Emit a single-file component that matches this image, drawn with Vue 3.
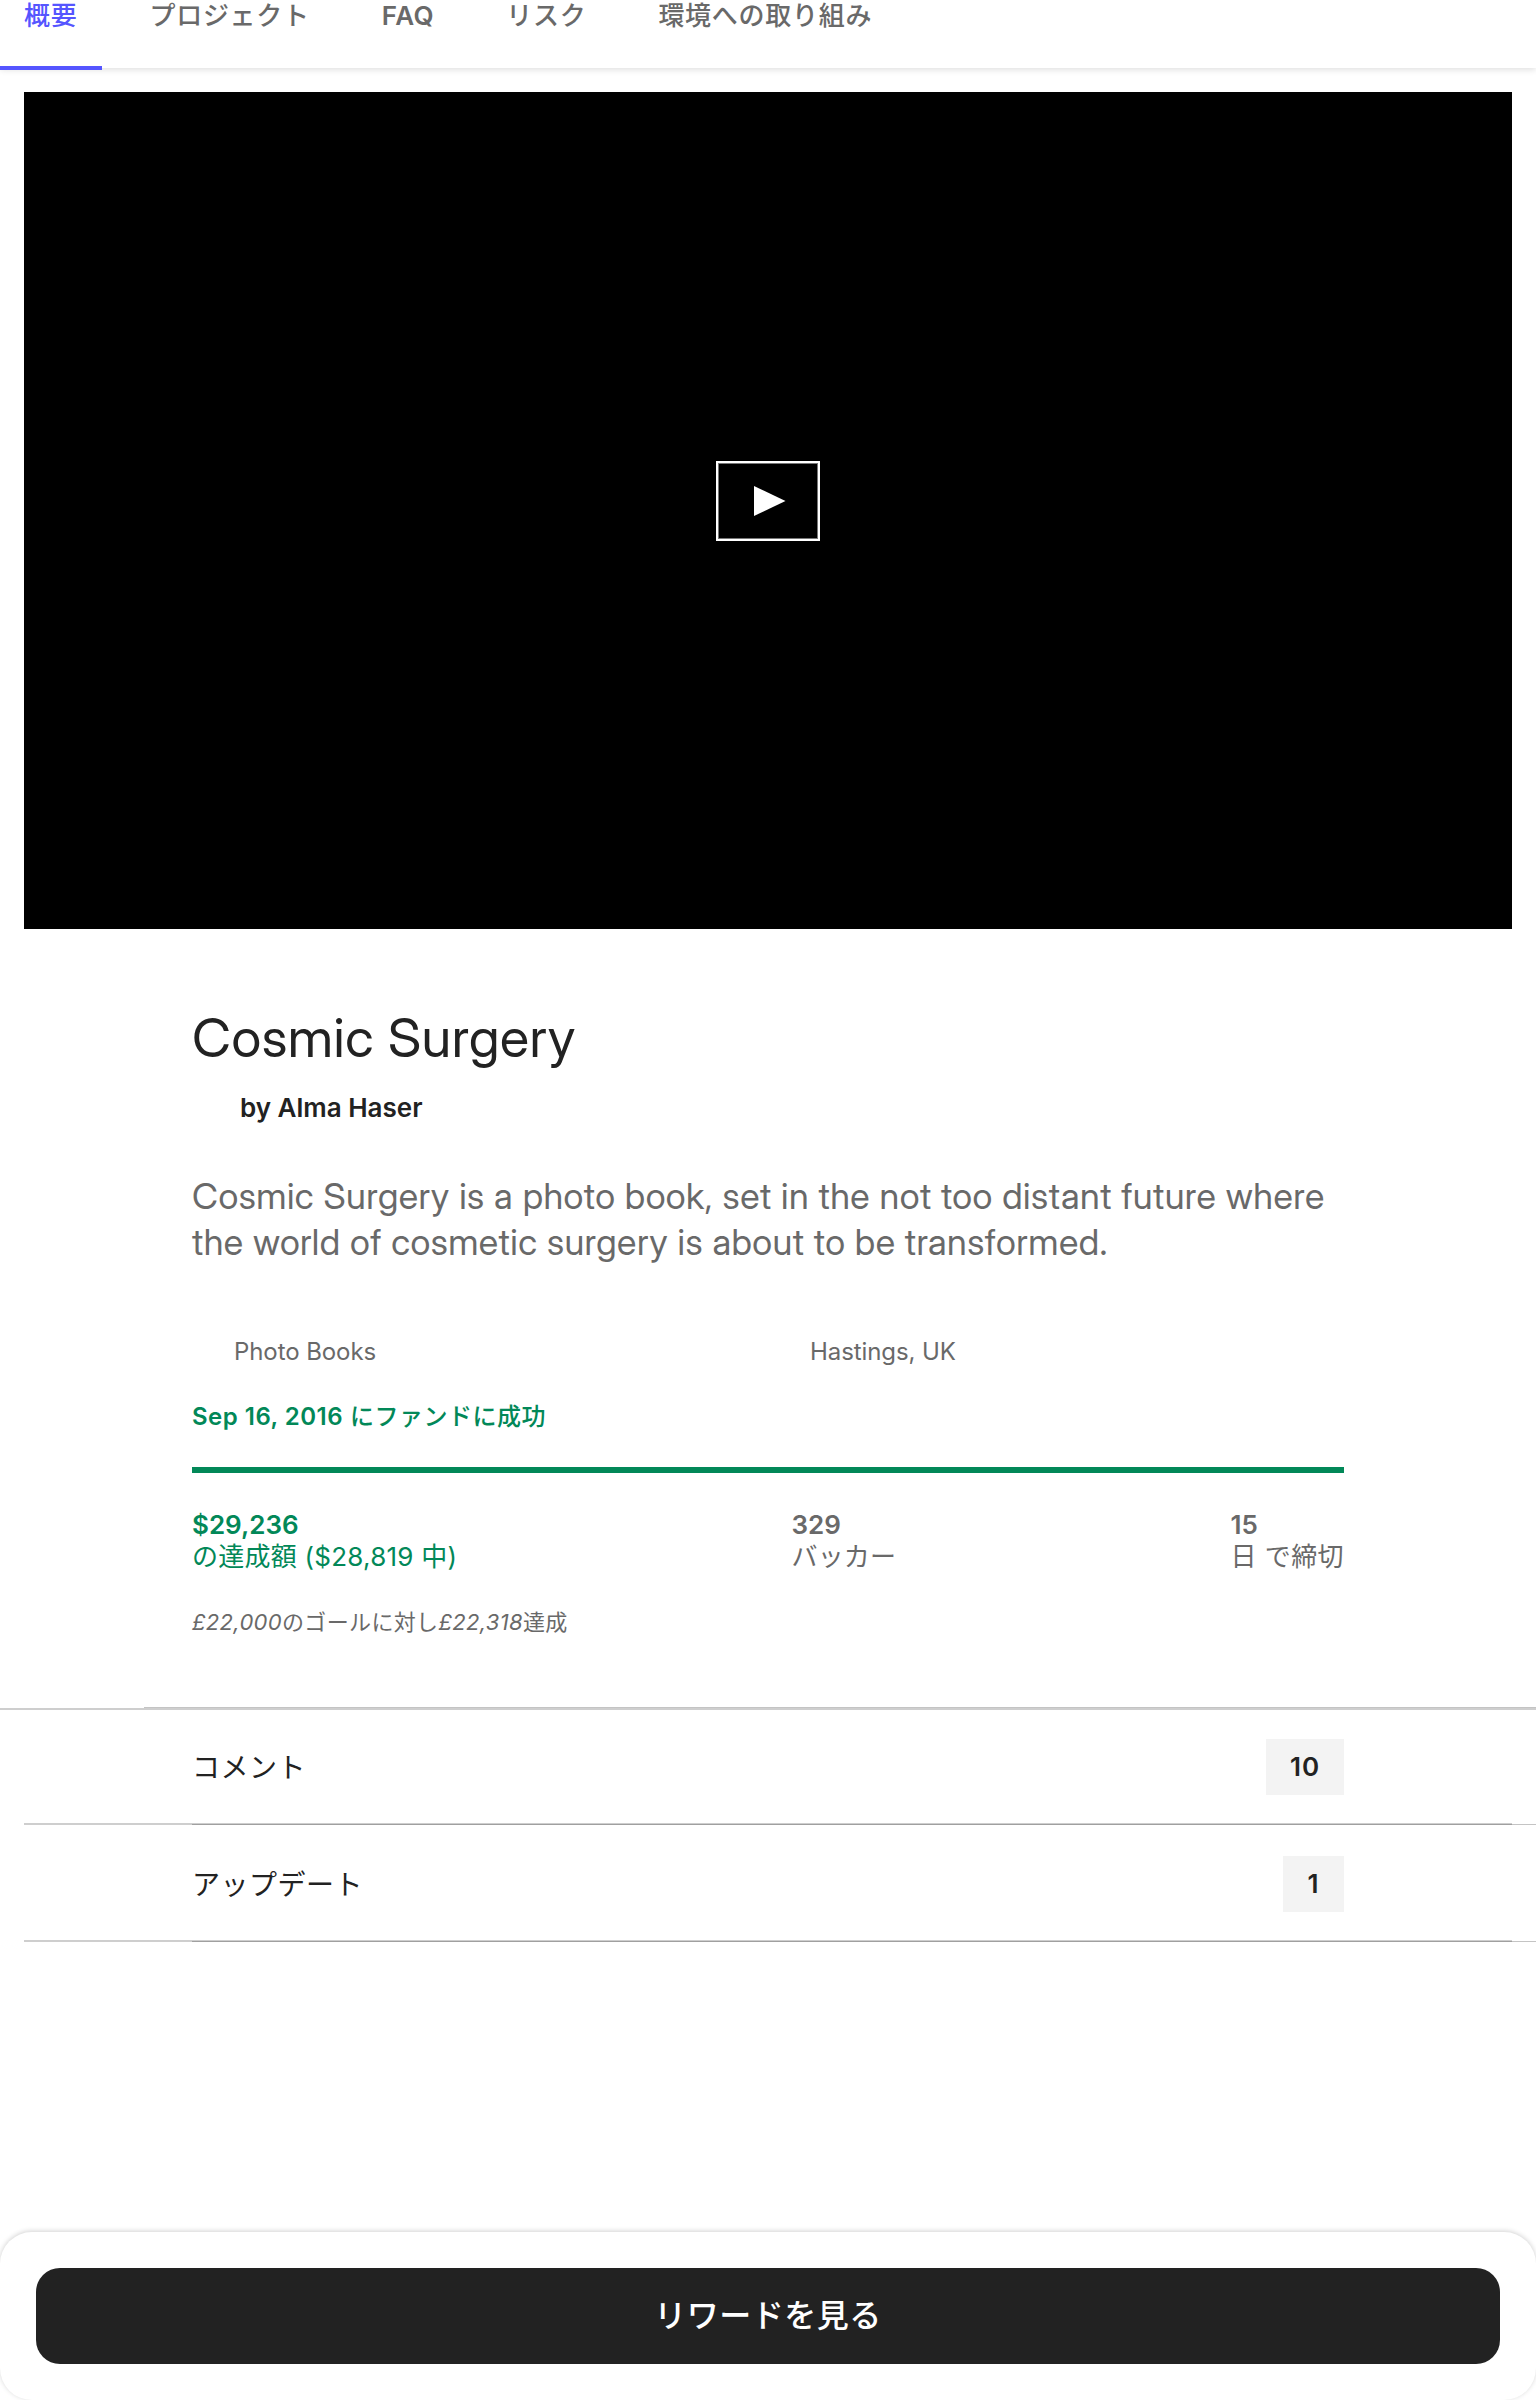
<script setup>
const tabs = ['概要', 'プロジェクト', 'FAQ', 'リスク', '環境への取り組み']
const rows = [
  { label: 'コメント', count: 10 },
  { label: 'アップデート', count: 1 },
]
</script>

<template>
  <div class="page">
    <nav class="tabs">
      <a v-for="(t, i) in tabs" :key="t" class="tab" :class="{ active: i === 0, latin: t === 'FAQ' }">{{ t }}</a>
    </nav>
    <section class="video">
      <button class="play" aria-label="play">
        <svg width="32" height="30" viewBox="0 0 32 30"><path d="M0 0 31.5 15 0 30Z" fill="#fff" /></svg>
      </button>
    </section>
    <main class="content">
      <h1 class="title">Cosmic Surgery</h1>
      <p class="author">by Alma Haser</p>
      <p class="blurb">Cosmic Surgery is a photo book, set in the not too distant future where the world of cosmetic surgery is about to be transformed.</p>
      <div class="meta"><span>Photo Books</span><span>Hastings, UK</span></div>
      <p class="funded"><time>Sep 16, 2016</time> にファンドに成功</p>
      <div class="bar"></div>
      <div class="stats">
        <div class="stat green"><b>$29,236</b><span>の達成額 ($28,819 中)</span></div>
        <div class="stat"><b>329</b><span>バッカー</span></div>
        <div class="stat"><b>15</b><span>日 で締切</span></div>
      </div>
      <p class="converted">£22,000のゴールに対し£22,318達成</p>
    </main>
    <section class="links">
      <div class="rule"></div>
      <div v-for="r in rows" :key="r.label" class="row">
        <span class="label">{{ r.label }}</span><span class="count">{{ r.count }}</span>
      </div>
    </section>
    <footer class="dock"><button class="cta">リワードを見る</button></footer>
  </div>
</template>

<style>
body { margin: 0; background: #fff; }
</style>

<style scoped>
.page { width: 1536px; height: 2400px; overflow: hidden; display: flex; flex-direction: column; font-family: Inter, "Noto Sans CJK JP", sans-serif; color: #222; }
.page, .page * { box-sizing: border-box; }
.tabs { position: relative; flex: none; height: 68px; padding-left: 24px; display: flex; gap: 72px; box-shadow: 0 2px 6px rgba(0,0,0,.12); font-size: 26px; font-weight: 500; line-height: 32px; letter-spacing: .72px; color: #696969; }
.tab.latin { font-weight: 600; letter-spacing: .5px; }
.tab.active { color: #5555ff; }
.tab.active::after { content: ""; position: absolute; left: 0; top: 66px; width: 102px; height: 4px; background: #5555ff; }
.video { flex: none; height: 837px; margin: 24px 24px 0; padding-bottom: 19px; background: #000; display: flex; align-items: center; justify-content: center; }
.play { width: 104px; height: 80px; padding: 0 0 0 4px; border: 2px solid #fff; background: #000; box-shadow: inset 0 0 0 1px #777; display: flex; align-items: center; justify-content: center; }
.content { flex: none; height: 778px; padding: 77px 192px 0; }
.title { margin: 0; font-family: "Inter Display", Inter, sans-serif; font-size: 54px; font-weight: 400; line-height: 64px; letter-spacing: .5px; }
.author { margin: 20px 0 0; padding-left: 48px; font-size: 26px; font-weight: 600; line-height: 36px; letter-spacing: 0; }
.blurb { margin: 47px 0 0; font-family: "Inter Display", Inter, sans-serif; font-size: 36px; line-height: 46px; letter-spacing: .46px; color: #696969; }
.meta { display: flex; margin-top: 69px; font-size: 24px; line-height: 36px; letter-spacing: -.08px; color: #696969; }
.meta span { width: 50%; padding-left: 42px; }
.funded { margin: 29px 0 32px; font-size: 24px; font-weight: 500; line-height: 36px; letter-spacing: .5px; color: #028858; }
.funded time { font-weight: 600; }
.bar { height: 6px; background: #028858; }
.stats { margin-top: 36px; display: flex; justify-content: space-between; color: #696969; font-size: 26px; line-height: 32px; letter-spacing: .24px; }
.stat { display: flex; flex-direction: column; }
.stat:last-child span { letter-spacing: .42px; }
.stat b { font-weight: 600; letter-spacing: 0; }
.stat.green { color: #028858; }
.converted { margin: 33px 0 0; font-size: 22px; line-height: 32px; letter-spacing: .34px; font-style: italic; font-synthesis: none; color: #696969; }
.links { flex: none; }
.rule { height: 3px; background: linear-gradient(#c4c4c4, #c4c4c4) 144px 0 / 1392px 1px no-repeat, linear-gradient(#cecece, #cecece) 0 1px / 100% 2px no-repeat; }
.row { height: 117px; padding: 31px 192px 0; display: flex; align-items: flex-start; justify-content: space-between; background: linear-gradient(#a0a0a0, #a0a0a0) 192px 100% / 1320px 1px no-repeat, linear-gradient(#cecece, #cecece) 24px 100% / 1488px 2px no-repeat, linear-gradient(#c4c4c4, #c4c4c4) 1512px 100% / 24px 1px no-repeat; }
.rule + .row { height: 115px; padding-top: 29px; }
.label { font-size: 28px; line-height: 58px; letter-spacing: .5px; }
.count { min-width: 61px; font-size: 26px; font-weight: 600; line-height: 56px; letter-spacing: .9px; text-align: center; padding: 0 24px; background: #f3f3f3; }
.dock { flex: none; margin-top: auto; height: 168px; padding: 36px; border-radius: 32px; box-shadow: 0 -1px 5px rgba(0,0,0,.18); }
.cta { display: block; width: 100%; height: 96px; padding: 0; border: 0; border-radius: 24px; background: #222; color: #fff; font: 500 32px/96px Inter, "Noto Sans CJK JP", sans-serif; letter-spacing: .5px; }
</style>
